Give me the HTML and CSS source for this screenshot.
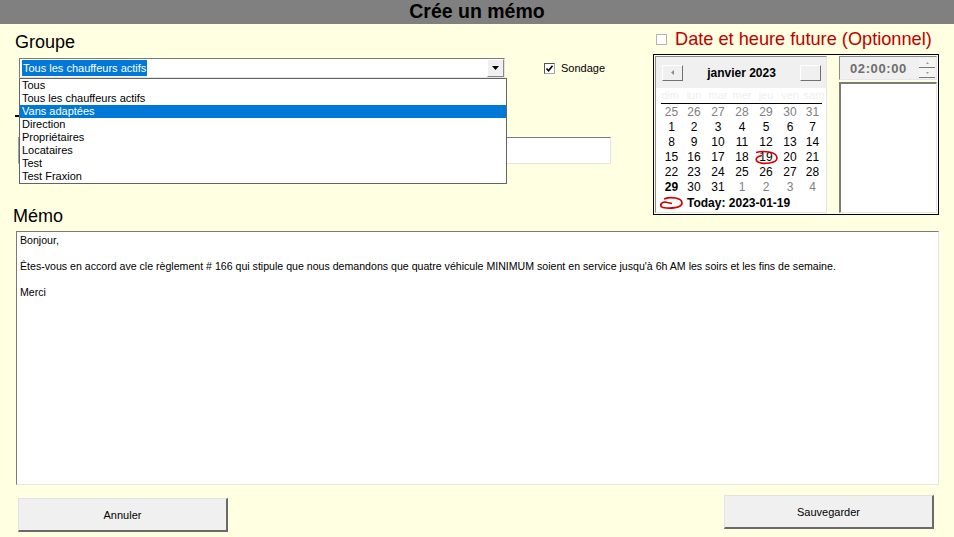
FILE: index.html
```html
<!DOCTYPE html>
<html>
<head>
    <meta charset="UTF-8">
    <title>Crée un mémo</title>
    <link rel="stylesheet" href="styles.css">
</head>
<body>
    <div class="titlebar">Crée un mémo</div>
    <div class="form">
        <div class="top">
            <div class="left">
                <div class="big-label groupe">Groupe</div>
                <div class="combo-row">
                    <div class="combo">
                        <div class="combo-text"><span class="sel">Tous les chauffeurs actifs</span></div>
                        <div class="combo-btn">
                            <svg width="7" height="4" viewBox="0 0 7 4"><path d="M0 0h7L3.5 4z" fill="#000"/></svg>
                        </div>
                        <ul class="combo-list">
                            <li>Tous</li>
                            <li>Tous les chauffeurs actifs</li>
                            <li class="active">Vans adaptées</li>
                            <li>Direction</li>
                            <li>Propriétaires</li>
                            <li>Locataires</li>
                            <li>Test</li>
                            <li>Test Fraxion</li>
                        </ul>
                    </div>
                    <label class="check sondage">
                        <span class="box checked">
                            <svg width="9" height="9" viewBox="0 0 9 9"><path d="M1.5 4.5l2 2.2L7.5 1.8" fill="none" stroke="#000" stroke-width="1.6"/></svg>
                        </span>
                        Sondage
                    </label>
                </div>
                <!-- label hidden under the open list, only its corner shows -->
                <div class="covered-label"></div>
                <div class="text-input"></div>
                <div class="big-label memo-label">Mémo</div>
            </div>
            <div class="right">
                <label class="check future"><span class="box"></span>Date et heure future (Optionnel)</label>
                <div class="schedule">
                    <div class="calendar">
                        <div class="cal-head">
                            <span class="cal-btn"><svg width="4" height="5" viewBox="0 0 4 5"><path d="M3 0v5L0 2.5z" fill="#8a8a8a"/></svg></span>
                            <span class="cal-title">janvier 2023</span>
                            <span class="cal-btn"></span>
                        </div>
                        <div class="cal-grid dows">
                            <span>dim</span><span>lun</span><span>mar</span><span>mer</span><span>jeu</span><span>ven</span><span>sam</span>
                        </div>
                        <div class="cal-grid days">
                            <span class="other">25</span><span class="other">26</span><span class="other">27</span><span class="other">28</span><span class="other">29</span><span class="other">30</span><span class="other">31</span>
                            <span>1</span><span>2</span><span>3</span><span>4</span><span>5</span><span>6</span><span>7</span>
                            <span>8</span><span>9</span><span>10</span><span>11</span><span>12</span><span>13</span><span>14</span>
                            <span>15</span><span>16</span><span>17</span><span>18</span>
                            <span class="today">19
                                <svg class="ring" width="26" height="16" viewBox="0 0 26 16"><path d="M2 2.5C9 0.5 23 1.5 23 8C23 13.5 9 14.5 4 12C1 10.5 1.5 6.5 8 5.5" fill="none" stroke="#d40000" stroke-width="1.6"/></svg>
                            </span>
                            <span>20</span><span>21</span>
                            <span>22</span><span>23</span><span>24</span><span>25</span><span>26</span><span>27</span><span>28</span>
                            <span class="bold">29</span><span>30</span><span>31</span><span class="other">1</span><span class="other">2</span><span class="other">3</span><span class="other">4</span>
                        </div>
                        <div class="cal-today">
                            <svg width="25" height="14" viewBox="0 0 25 14"><path d="M5 3C11 0.5 23 1.5 23 7C23 12 11 13 4 11.5C0.5 10.5 1 6.5 6 6L13 7.5" fill="none" stroke="#d40000" stroke-width="1.7"/></svg>
                            <span>Today: 2023-01-19</span>
                        </div>
                    </div>
                    <div class="time-col">
                        <div class="time-field">
                            <span class="time-text">02:00:00</span>
                            <span class="spin">
                                <span class="spin-btn"><svg width="3" height="2" viewBox="0 0 3 2"><path d="M0 2h3L1.5 0z" fill="#9a9a9a"/></svg></span>
                                <span class="spin-btn"><svg width="3" height="2" viewBox="0 0 3 2"><path d="M0 0h3L1.5 2z" fill="#9a9a9a"/></svg></span>
                            </span>
                        </div>
                        <div class="list-box"></div>
                    </div>
                </div>
            </div>
        </div>
        <div class="memo">Bonjour,<br><br>Êtes-vous en accord ave cle règlement # 166 qui stipule que nous demandons que quatre véhicule MINIMUM soient en service jusqu'à 6h AM les soirs et les fins de semaine.<br><br>Merci</div>
        <div class="actions">
            <button class="cancel">Annuler</button>
            <button class="save">Sauvegarder</button>
        </div>
    </div>
</body>
</html>
```

FILE: styles.css
```css
html,
body {
    margin: 0;
    width: 954px;
    height: 537px;
    overflow: hidden;
}
body {
    background: #ffffe1;
    font-family: "Liberation Sans", Arial, sans-serif;
    color: #000;
}
.titlebar {
    height: 24px;
    line-height: 22px;
    background: #808080;
    text-align: center;
    font-weight: bold;
    font-size: 19.5px;
}
.top {
    display: flex;
    padding-top: 8px;
}
.left {
    width: 653px;
    padding-left: 13px;
    box-sizing: border-box;
}
.big-label {
    font-size: 18px;
    line-height: 20px;
}
.groupe {
    margin-left: 2px;
}
.combo-row {
    display: flex;
    align-items: center;
    margin-top: 6px;
    margin-left: 6px;
}
.combo {
    position: relative;
    display: flex;
    width: 486px;
    height: 20px;
    box-sizing: border-box;
    background: #fff;
    border-top: 1px solid #7a7a7a;
    border-left: 1px solid #7a7a7a;
    border-right: 1px solid #e3e3e3;
    border-bottom: 1px solid #e3e3e3;
}
.combo-text {
    flex: 1;
    padding: 1px 0 0 2px;
    font-size: 11px;
    line-height: 16px;
}
.sel {
    display: inline-block;
    background: #0078d7;
    color: #fff;
    padding: 0 1px;
}
.combo-btn {
    width: 17px;
    display: flex;
    align-items: center;
    justify-content: center;
    background: #f0f0f0;
    box-sizing: border-box;
    border-top: 1px solid #fff;
    border-left: 1px solid #fff;
    border-right: 1px solid #8a8a8a;
    border-bottom: 1px solid #8a8a8a;
}
.combo-list {
    position: absolute;
    top: 19px;
    left: -1px;
    width: 488px;
    margin: 0;
    padding: 0;
    list-style: none;
    background: #fff;
    border: 1px solid #646464;
    box-sizing: border-box;
    z-index: 2;
}
.combo-list li {
    height: 13px;
    line-height: 13px;
    font-size: 11px;
    padding-left: 2px;
}
.combo-list li.active {
    background: #0078d7;
    color: #fff;
}
.check {
    display: flex;
    align-items: center;
}
.box {
    display: flex;
    align-items: center;
    justify-content: center;
    width: 11px;
    height: 11px;
    box-sizing: border-box;
    background: #fff;
    border: 1px solid #a6a6a6;
}
.box.checked {
    border-top-color: #555;
    border-left-color: #555;
}
.sondage {
    margin-left: 39px;
    font-size: 11px;
}
.sondage .box {
    margin-right: 6px;
}
.covered-label {
    width: 12px;
    height: 20px;
    margin-top: 34px;
    margin-left: 2px;
    box-sizing: border-box;
    border-top: 2px solid #000;
    position: relative;
    top: 3px;
}
.text-input {
    width: 593px;
    height: 27px;
    margin-top: 5px;
    margin-left: 5px;
    box-sizing: border-box;
    background: #fff;
    border-top: 1px solid #7a7a7a;
    border-left: 1px solid #a0a0a0;
    border-right: 1px solid #e3e3e3;
    border-bottom: 1px solid #e3e3e3;
}
.memo-label {
    margin-top: 42px;
}
.right {
    width: 286px;
    margin-top: -3px;
}
.future {
    height: 20px;
    padding-left: 3px;
    font-size: 18.2px;
    color: #c00000;
}
.future .box {
    margin-right: 8px;
    border-color: #b4b4b4;
}
.schedule {
    display: flex;
    justify-content: space-between;
    margin-top: 5px;
    height: 161px;
    box-sizing: border-box;
    border: 1px solid #000;
    padding: 1px;
}
.calendar {
    width: 172px;
    box-sizing: border-box;
    background: #fff;
    border-top: 1px solid #8a8a8a;
    border-left: 1px solid #8a8a8a;
    border-right: 1px solid #e6e6e6;
    border-bottom: 1px solid #e6e6e6;
}
.cal-head {
    height: 31px;
    background: #f0f0f0;
    display: flex;
    align-items: center;
    justify-content: space-between;
    padding: 0 5px 0 6px;
}
.cal-btn {
    width: 21px;
    height: 16px;
    box-sizing: border-box;
    display: flex;
    align-items: center;
    justify-content: center;
    background: #f0f0f0;
    border-top: 1px solid #fff;
    border-left: 1px solid #fff;
    border-right: 1px solid #707070;
    border-bottom: 1px solid #707070;
}
.cal-title {
    font-weight: bold;
    font-size: 12px;
}
.cal-grid {
    display: grid;
    grid-template-columns: repeat(7, 24px);
    padding-left: 2px;
}
.cal-grid span {
    text-align: center;
}
.dows {
    height: 15px;
    line-height: 15px;
    font-size: 11px;
    color: #efefef;
}
.days {
    border-top: 1px solid #000;
    margin: 0 4px 0 5px;
    padding-top: 1px;
    padding-left: 0;
    grid-template-columns: 21px repeat(5, 24px) 21px;
}
.days span {
    height: 15px;
    line-height: 15px;
    font-size: 12px;
    position: relative;
}
.days .other {
    color: #808080;
}
.days .bold {
    font-weight: bold;
}
.ring {
    position: absolute;
    left: 0;
    top: 0;
}
.cal-today {
    display: flex;
    align-items: center;
    height: 16px;
    padding-left: 3px;
    font-weight: bold;
    font-size: 12px;
}
.cal-today svg {
    margin-right: 3px;
}
.time-col {
    width: 98px;
    display: flex;
    flex-direction: column;
}
.time-field {
    height: 24px;
    box-sizing: border-box;
    display: flex;
    align-items: center;
    justify-content: space-between;
    background: #f0f0f0;
    border-top: 1px solid #8a8a8a;
    border-left: 1px solid #8a8a8a;
    border-right: 1px solid #e6e6e6;
    border-bottom: 1px solid #e6e6e6;
    padding: 0 1px 0 10px;
}
.time-text {
    font-size: 13px;
    font-weight: bold;
    letter-spacing: 0.6px;
    color: #6e6e6e;
}
.spin {
    display: flex;
    flex-direction: column;
    width: 16px;
}
.spin-btn {
    height: 9px;
    display: flex;
    align-items: center;
    justify-content: center;
    border-bottom: 1px solid #7a7a7a;
    background: #f4f4f4;
}
.list-box {
    flex: 1;
    margin-top: 2px;
    background: #fff;
    box-sizing: border-box;
    border-top: 2px solid #7a7a7a;
    border-left: 2px solid #7a7a7a;
    border-right: 1px solid #e6e6e6;
    border-bottom: 1px solid #e6e6e6;
}
.memo {
    margin: 5px 0 0 16px;
    width: 923px;
    height: 254px;
    box-sizing: border-box;
    background: #fff;
    border-top: 1px solid #7a7a7a;
    border-left: 1px solid #7a7a7a;
    border-right: 1px solid #e6e6e6;
    border-bottom: 1px solid #e6e6e6;
    padding: 2px 3px;
    font-size: 10.6px;
    line-height: 13px;
}
.actions {
    display: flex;
    justify-content: space-between;
    align-items: flex-start;
    padding: 0 20px 0 18px;
}
button {
    width: 210px;
    height: 34px;
    background: #f0f0f0;
    font-family: "Liberation Sans", Arial, sans-serif;
    font-size: 11px;
    color: #000;
    border-top: 1px solid #e2e2e2;
    border-left: 1px solid #e2e2e2;
    border-right: 2px solid #6a6a6a;
    border-bottom: 2px solid #6a6a6a;
    padding: 0;
}
.cancel {
    margin-top: 13px;
}
.save {
    margin-top: 10px;
}
```
